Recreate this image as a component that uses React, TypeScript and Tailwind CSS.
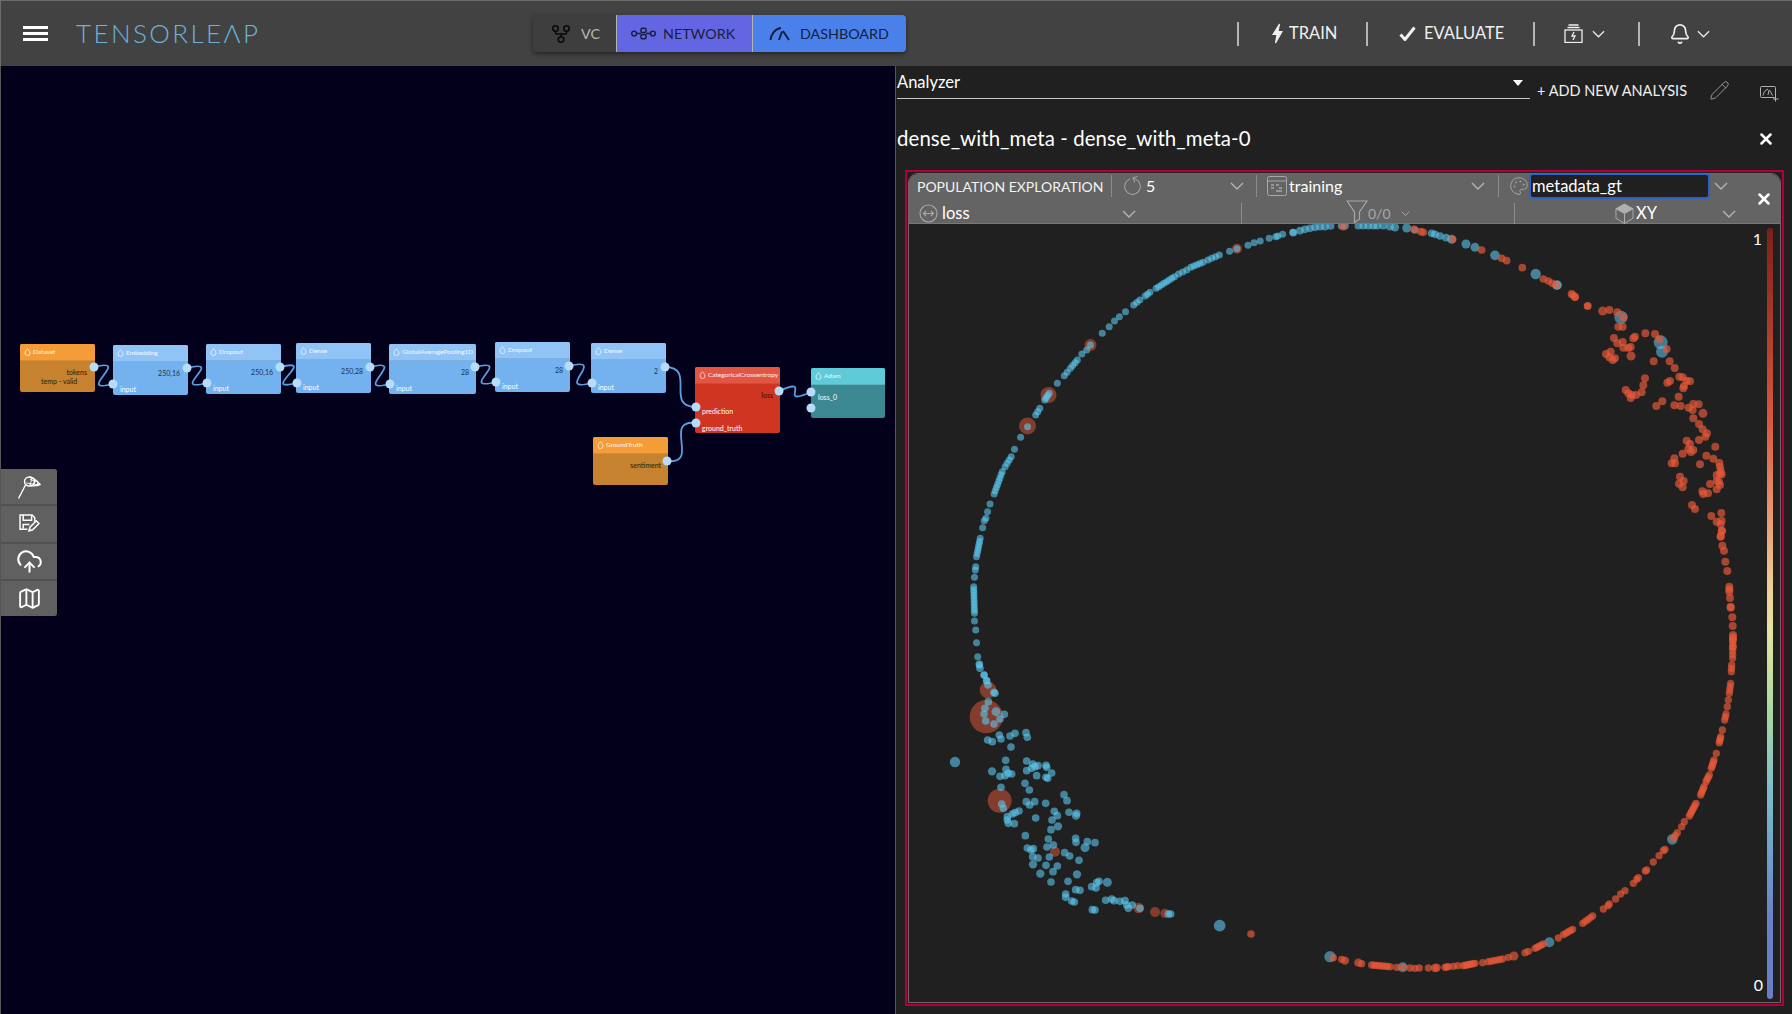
import React from "react";
import { Bell, CloudUpload, GitFork, Map as MapIcon, Palette, Pencil, RotateCw, X } from "lucide-react";

type D = [number, number, number];
const run = (x1: number, y1: number, x2: number, y2: number, n: number): [number, number][] =>
  Array.from({ length: n }, (_, i) => [x1 + ((x2 - x1) * i) / Math.max(1, n - 1), y1 + ((y2 - y1) * i) / Math.max(1, n - 1)]);

const z5 = (p: number[]): D => [920 + p[0] / 3, 660 + p[1] / 3, (p[2] ?? 10) / 3];
const z6 = (p: number[]): D => [1540 + p[0] / 3, 280 + p[1] / 3, (p[2] ?? 10.5) / 3];
const z7 = (p: number[]): D => [950 + p[0] / 2.45, 210 + p[1] / 3, 3];
const z8 = (p: number[]): D => [1280 + p[0] / 3, 640 + p[1] / 3, (p[2] ?? 9.5) / 3];
const z9 = (p: number[]): D => [1290 + p[0] / 3, 210 + p[1] / 3, (p[2] ?? 10) / 3];
const z11 = (p: number[]): D => [1660 + p[0] / 3, 530 + p[1] / 3, 3.5];

const bigRed: D[] = [
  ...[[204, 90, 25], [199, 170, 50], [239, 422, 36], [405, 575, 15], [656, 744, 16], [705, 756, 15], [735, 760, 14]].map(z5),
  [1027.5, 426, 8.5], [1048.5, 395, 8], [1090.5, 345, 6], [1237, 248.7, 5],
];
const bigBlue: D[] = [
  ...[[52, 15, 14], [243, 112, 20], [362, 187, 21], [366, 215, 18]].map(z6),
  ...[[150, 950, 17], [368, 982, 15], [808, 907, 15], [1177, 598, 16]].map(z8),
];
const blue: D[] = [
  ...[[178,12],[180,25],[192,45],[200,62],[204,75],[222,97],[225,100],[205,125],[195,145],[192,162],[228,155,12],[253,163],[197,183],[222,192],[240,177],[245,432],[250,445],[238,225],[243,237],[270,228],[285,220],[318,218],[322,232],[203,240],[217,245],[273,261],[105,306,14],[257,301],[320,303],[338,312],[354,317],[378,316],[380,322],[320,332],[335,325],[345,320],[395,339],[216,334,11],[258,328],[240,349],[255,347],[265,340],[275,342],[350,347],[378,352],[383,355],[315,370],[328,390],[243,382],[432,404],[441,422],[319,425],[329,435],[344,425],[377,430],[403,454],[412,467],[447,457],[468,467,11],[470,460],[297,453],[285,458],[277,462],[262,470],[265,490],[262,480],[283,491],[347,474],[396,480],[414,499,11],[393,509],[316,527],[385,537],[467,535],[468,547],[502,545],[525,548],[495,563,12],[400,555],[381,561],[322,564],[333,570],[340,566],[338,590],[354,594],[388,591],[434,578],[449,588],[477,601],[339,613,11],[378,616],[412,618],[399,635],[361,641,11],[471,643,11],[393,666],[444,664],[537,664],[530,668],[515,680],[528,684],[562,667,12],[437,702],[437,712],[467,689],[480,691],[455,723],[463,726],[557,721],[575,717],[582,722],[600,724],[615,722],[625,745],[637,735],[620,735],[517,749],[525,750],[660,745],[745,762],[752,762],[899,797,16]].map(z5),
  ...[
    [90,1412],[84,1395],[72,1365],[68,1340],[65,1298],[63,1260],[60,1233],
    ...run(60,1210,58,1130,10),[60,1102],[62,1080],[63,1070],...run(65,1040,74,985,7),
    [80,953],[84,932],[88,925],[92,905],[98,882],...run(108,852,128,785,8),...run(135,770,150,740,4),
    [158,718],[173,682],[190,650],...run(210,615,220,595,3),...run(232,570,243,550,4),[263,520],
    ...run(280,497,287,487,2),...run(295,475,312,450,4),[323,432],[335,420],[344,405],
    [373,370],[390,350],[403,333],[415,320],[430,305],...run(450,285,465,270,3),...run(478,258,490,247,3),
    ...run(505,235,550,200,8),...run(560,192,580,180,3),...run(590,172,620,157,5),...run(632,150,660,135,4),
    [685,124],[703,116],[730,106],[745,98],[760,93],[782,85],[798,80],[803,78],[815,73],[840,67],
  ].map(z7),
  ...[[10,68],[30,62],[45,58],[60,55],[75,52],[90,50],[105,50],[122,48],[155,47],[165,47],[205,47],[220,47],[235,47],[250,47],[262,47],[280,47],[300,50],[315,52,11],[350,54,12],[375,60],[425,70],[435,73],[450,78],[468,83],[485,88,12],[528,102,12],[555,112,12],[615,136,13],[737,192,14],[800,226,12]].map(z9),
];
const red: D[] = [
  ...[[160,50],[372,58],[393,65],[400,67],[488,88],[575,120],[635,145],[650,152],[697,173],[760,207],[775,213],[787,220],[800,226],[848,255],[855,262],[893,288,9]].map(z9),
  ...[[95,42],[105,50],[143,78],[188,93,12],[208,90],[232,97],[250,112],[235,140],[248,140],[285,170],[280,175],[316,160],[345,162],[358,178],[380,207],[222,174],[232,190],[248,186],[250,203],[265,204],[272,201],[273,228,12],[198,222],[212,215],[208,232],[218,240],[225,235],[341,244],[389,244],[404,264],[315,295],[310,316],[305,337],[288,345],[275,345],[272,354],[257,330],[265,340],[418,290],[428,292],[440,302],[450,304],[432,318],[430,325],[382,308],[390,303],[416,350],[367,364],[349,378],[403,376],[422,378],[446,383],[460,372],[476,373],[458,390],[489,400,12],[460,415],[477,432],[488,448],[501,460],[496,470],[477,480],[440,482],[450,492],[445,507],[460,510],[453,516],[428,521],[526,500],[499,527],[520,536],[538,549],[540,560],[480,553],[403,535],[395,550],[405,550],[542,572],[540,582],[530,585],[545,583],[530,603],[537,605],[510,612],[540,615],[530,628],[420,590],[431,603],[417,611],[428,622],[487,634],[490,642],[504,640],[456,675],[465,687],[514,708],[544,699],[530,725],[545,722],[542,733],[545,752],[542,770]].map(z6),
  ...[[186,3],[182,18],[187,47],[192,62],[196,95],[202,123],[208,170],[208,178],[208,185],[210,204],[212,230],[212,233],[217,262],[218,288],[219,315],[219,322],[219,330],[219,350]].map(z11),
  ...[...run(1358,0,1358,55,6),...run(1355,75,1354,95,3),...run(1352,130,1348,160,4),[1345,180],[1342,200],...run(1338,222,1334,240,3),[1327,270],...run(1322,290,1318,308,4),[1309,340],...run(1302,360,1294,385,5),...run(1288,405,1278,425,4),...run(1272,440,1262,465,5),...run(1248,490,1228,528,7),...run(1213,545,1205,560,2),...run(1192,578,1180,595,3),[1155,628],[1150,632],[1137,647],[1120,666],[1100,690],[1096,693],[1075,713],[1070,718],[1060,730],[1035,752],[1022,762],[1007,777],[988,792],[984,797],[970,807],...run(938,828,908,850,5),...run(878,868,850,884,5),[835,894],...run(790,912,765,925,5),[745,934],[735,938],[702,948,12],[685,952],...run(668,957,625,965,6),[608,968],...run(585,970,550,977,7),[533,977],[520,979],...run(505,980,495,982,3),[470,983,11],[465,984,11],[445,984],[418,984],[405,985],[390,984],[370,982],[350,982],...run(330,980,275,975,8),[245,971],[235,968,11],[195,962,11],[185,958],[160,953]].map(z8),
  [1251, 934, 3.3],
];

const Chev = ({ cls = "w-[14px] h-[8px] text-[#b4b4b4]" }: { cls?: string }) => (
  <svg viewBox="0 0 14 8" className={cls} fill="none" stroke="currentColor" strokeWidth="1.4"><path d="M1 1l6 6 6-6" /></svg>
);
const Sep = () => <div className="w-[2px] h-[24px] bg-[#b5b5b5]" />;
const TSep = ({ cls = "h-[22px]" }: { cls?: string }) => <div className={`w-[1px] bg-[#8c8c8c] shrink-0 ${cls}`} />;

const Drop = () => (
  <svg viewBox="0 0 10 12" className="w-[7px] h-[8px] shrink-0 text-white" fill="none" stroke="currentColor" strokeWidth="1"><path d="M5 1C3.6 3 1.2 5 1.2 7.5a3.8 3.8 0 0 0 7.6 0C8.8 5 6.4 3 5 1z" /></svg>
);

type Row = { t: string; c: string };
type N = { title: string; pos: string; head: string; body: string; rows: Row[] };
const bh = "bg-[#91c4f6]", bb = "bg-[#73b1ef]";
const oh = "bg-[#f39c38]", ob = "bg-[#c6822e]";
const dark = "text-[#22344a]";
const nodes: N[] = [
  { title: "Dataset", pos: "left-[20px] top-[278px] w-[75px] h-[48px]", head: oh, body: ob, rows: [
    { t: "tokens", c: "self-end mr-[8px] mt-[7px] text-[#2a1c08]" }, { t: "temp - valid", c: "ml-[21px] mt-[1px] text-[#2a1c08]" } ] },
  { title: "Embedding", pos: "left-[113px] top-[279px] w-[75px] h-[50px]", head: bh, body: bb, rows: [
    { t: "250,16", c: `self-end mr-[8px] mt-[7px] ${dark}` }, { t: "input", c: "ml-[7px] mt-[8px] text-white" } ] },
  { title: "Dropout", pos: "left-[206px] top-[278px] w-[75px] h-[50px]", head: bh, body: bb, rows: [
    { t: "250,16", c: `self-end mr-[8px] mt-[7px] ${dark}` }, { t: "input", c: "ml-[7px] mt-[8px] text-white" } ] },
  { title: "Dense", pos: "left-[296px] top-[277px] w-[75px] h-[50px]", head: bh, body: bb, rows: [
    { t: "250,28", c: `self-end mr-[8px] mt-[7px] ${dark}` }, { t: "input", c: "ml-[7px] mt-[8px] text-white" } ] },
  { title: "GlobalAveragePooling1D", pos: "left-[389px] top-[278px] w-[87px] h-[50px]", head: bh, body: bb, rows: [
    { t: "28", c: `self-end mr-[7px] mt-[7px] ${dark}` }, { t: "input", c: "ml-[7px] mt-[8px] text-white" } ] },
  { title: "Dropout", pos: "left-[495px] top-[276px] w-[75px] h-[50px]", head: bh, body: bb, rows: [
    { t: "28", c: `self-end mr-[7px] mt-[7px] ${dark}` }, { t: "input", c: "ml-[7px] mt-[8px] text-white" } ] },
  { title: "Dense", pos: "left-[591px] top-[277px] w-[75px] h-[50px]", head: bh, body: bb, rows: [
    { t: "2", c: `self-end mr-[8px] mt-[7px] ${dark}` }, { t: "input", c: "ml-[7px] mt-[8px] text-white" } ] },
  { title: "CategoricalCrossentropy", pos: "left-[695px] top-[301px] w-[85px] h-[66px]", head: "bg-[#e25543]", body: "bg-[#d03522]", rows: [
    { t: "loss", c: "self-end mr-[7px] mt-[7px] text-[#3a0d06]" }, { t: "prediction", c: "ml-[7px] mt-[8px] text-white" }, { t: "ground_truth", c: "ml-[7px] mt-[9px] text-white" } ] },
  { title: "Adam", pos: "left-[811px] top-[302px] w-[74px] h-[50px]", head: "bg-[#5fcbd9]", body: "bg-[#3b8892]", rows: [
    { t: "loss_0", c: "ml-[7px] mt-[8px] text-white" } ] },
  { title: "GroundTruth", pos: "left-[593px] top-[371px] w-[75px] h-[48px]", head: oh, body: ob, rows: [
    { t: "sentiment", c: "self-end mr-[7px] mt-[7px] text-[#2a1c08]" } ] },
];
const edge = (a: number, b: number, c: number, e: number, d = 40, o = 10) => `M${a} ${b}C${a + d} ${b - o} ${c - d} ${e + o} ${c} ${e}`;
const edges = [
  edge(94, 367, 113, 384), edge(187, 368, 207, 383), edge(280, 367, 297, 383), edge(370, 367, 390, 384),
  edge(475, 367, 496, 382), edge(569, 366, 592, 383), edge(665, 367, 696, 407, 32, 0), edge(667, 461, 696, 423, 34, -4),
  edge(779, 391, 811, 392, 36, 16),
];
const ports = [[94,367],[113,384],[187,368],[207,383],[280,367],[297,383],[370,367],[390,384],[475,367],[496,382],[569,366],[592,383],[665,367],[696,407],[696,423],[667,461],[779,391],[811,392],[811,408]];

const Tab = ({ cls, children }: { cls: string; children: React.ReactNode }) => (
  <div className={`flex items-center h-full text-[14.3px] ${cls}`}>{children}</div>
);

export default function App() {
  return (
    <div className="w-[1792px] h-[1014px] overflow-hidden flex flex-col bg-[#202020] text-white font-['Lato',sans-serif]">
      <header className="h-[66px] shrink-0 flex items-center bg-[#424242] border-t border-l border-[#6c6c6c] border-b-0">
        <div className="ml-[22px] w-[25px] flex flex-col gap-[3px]">
          <div className="h-[3px] bg-white" /><div className="h-[3px] bg-white" /><div className="h-[3px] bg-white" />
        </div>
        <div className="ml-[28px] w-[183px] -mt-[2px] text-[26px] leading-none font-light tracking-[2.4px] text-[#6db3d8] whitespace-nowrap">TENSORLEΛP</div>
        <div className="ml-[274px] w-[373px] h-[37px] flex rounded-[4px] overflow-hidden shadow-[0_2px_4px_rgba(0,0,0,0.45)]">
          <Tab cls="w-[83px] bg-[#3e3e3e] pl-[17px] text-[#b9b9b9] gap-[9px]"><GitFork size={22} className="text-[#0a0a0a]" strokeWidth={1.8} /><span>VC</span></Tab>
          <div className="w-[1px] bg-[#b5b5b5]" />
          <Tab cls="w-[135px] bg-[#6366e2] pl-[14px] text-[#1a1d3c] gap-[7px]">
            <svg viewBox="0 0 24 12" className="w-[25px] h-[13px] shrink-0" fill="none" stroke="currentColor" strokeWidth="1.4"><circle cx="3" cy="6" r="2.3" /><rect x="9.5" y="1" width="5" height="4" rx="1.4" /><rect x="9.5" y="7" width="5" height="4" rx="1.4" /><circle cx="21" cy="6" r="2.3" /><path d="M5.3 6H9.5M14.5 6H18.7" /></svg>
            <span>NETWORK</span>
          </Tab>
          <div className="w-[1px] bg-[#b5b5b5]" />
          <Tab cls="w-[153px] bg-[#4a80ea] pl-[16px] text-[#10203f] gap-[9px]">
            <svg viewBox="0 0 22 14" className="w-[22px] h-[15px] shrink-0" fill="none" stroke="currentColor" strokeWidth="2"><path d="M1.5 13.5C2 8 5.5 2.5 12 1.5" /><path d="M13 5l-3 8.5M14 4.5l6 9" /></svg>
            <span>DASHBOARD</span>
          </Tab>
        </div>
        <div className="ml-[331px] flex items-center text-[16.5px] text-[#f0f0f0]">
          <Sep />
          <div className="w-[127px] pl-[33px] flex items-center gap-[6px]">
            <svg viewBox="0 0 11 21" className="w-[11px] h-[21px]" fill="none" stroke="currentColor" strokeWidth="1.2"><path d="M7.5 1L1 11.5h4L3.5 20 10 8.5H6L7.5 1z" fill="currentColor" /></svg>
            <span>TRAIN</span>
          </div>
          <Sep />
          <div className="w-[165px] pl-[31px] flex items-center gap-[8px]">
            <svg viewBox="0 0 17 15" className="w-[17px] h-[15px]" fill="none" stroke="currentColor" strokeWidth="3"><path d="M1.5 8.5l4.5 5L15.5 1.5" /></svg>
            <span>EVALUATE</span>
          </div>
          <Sep />
          <div className="w-[103px] pl-[29px] flex items-center gap-[9px]">
            <svg viewBox="0 0 19 19" className="w-[19px] h-[19px]" fill="none" stroke="currentColor" strokeWidth="1.3"><path d="M4.5 1h10M3.5 3.5h12" /><rect x="1" y="6" width="17" height="12.5" /><path d="M10 8l-2 4h3l-2 4" /></svg>
            <Chev cls="w-[13px] h-[8px] text-[#e8e8e8]" />
          </div>
          <Sep />
          <div className="pl-[29px] flex items-center gap-[6px]">
            <Bell size={22} strokeWidth={1.8} />
            <Chev cls="w-[13px] h-[8px] text-[#e8e8e8]" />
          </div>
        </div>
      </header>

      <div className="flex-1 flex min-h-0">
        <main className="relative w-[896px] shrink-0 bg-[#02001a] border-l border-r border-[#555] overflow-hidden">
          <div className="absolute -left-[1px] top-0 w-[896px] h-[948px]">
            {nodes.map((n, i) => (
              <div key={i} className={`absolute flex flex-col rounded-[2px] overflow-hidden text-[7px] leading-[8px] ${n.pos} ${n.body}`}>
                <div className={`h-[17px] shrink-0 flex items-center gap-[2px] pl-[4px] text-[6.5px] text-white/90 border-b border-black/10 whitespace-nowrap ${n.head}`}><Drop /><span>{n.title}</span></div>
                {n.rows.map((r, j) => <div key={j} className={r.c}>{r.t}</div>)}
              </div>
            ))}
            <svg viewBox="0 66 896 948" className="absolute left-0 top-0 w-[896px] h-[948px] pointer-events-none" fill="none">
              {edges.map((d, i) => <path key={i} d={d} stroke="#5c9fe0" strokeWidth="1.8" />)}
              {ports.map((p, i) => <circle key={i} cx={p[0]} cy={p[1]} r="4.5" fill="#b6dcf8" />)}
            </svg>
          </div>
          <aside className="absolute left-0 top-[403px] w-[56px] h-[147px] flex flex-col rounded-r-[3px] overflow-hidden bg-[#515151] gap-[2px] text-white">
            <div className="flex-1 bg-[#606060] flex items-center justify-center">
              <svg viewBox="0 0 24 24" className="w-[24px] h-[24px]" fill="none" stroke="currentColor" strokeWidth="1.4"><path d="M1.5 23.5L8.5 10" /><ellipse cx="12.5" cy="6.5" rx="5" ry="4.5" /><path d="M12.5 2C17 2.5 20 6 23 9.5c-3.5 1.5-7 2-10 .5" /><path d="M15 3l-2 7M18 5l-2 6M21 8l-3 3M9 8l13 2M13 4l6 3" strokeWidth="0.9" /></svg>
            </div>
            <div className="flex-1 bg-[#606060] flex items-center justify-center">
              <svg viewBox="0 0 20 19" className="w-[21px] h-[20px]" fill="none" stroke="currentColor" strokeWidth="1.4"><path d="M8 14.5H1V1h11.5L15 3.5V8" /><path d="M4 1v5h8V1M4 14v-4h6" /><path d="M9.5 16l1-3.5 6-6 2.5 2.5-6 6-3.5 1z" /></svg>
            </div>
            <div className="flex-1 bg-[#606060] flex items-center justify-center"><CloudUpload size={27} strokeWidth={1.8} /></div>
            <div className="flex-1 bg-[#606060] flex items-center justify-center"><MapIcon size={25} strokeWidth={1.8} /></div>
          </aside>
        </main>

        <section className="flex-1 min-w-0 flex flex-col">
          <div className="h-[33px] shrink-0 flex items-start">
            <div className="ml-[1px] w-[633px] h-[33px] border-b border-[#c8c8c8] flex items-start justify-between">
              <span className="text-[16.5px] leading-[20px] mt-[6px]">Analyzer</span>
              <svg viewBox="0 0 10 6" className="w-[10px] h-[6px] mt-[14px] mr-[7px] text-white"><path d="M0 0h10L5 6z" fill="currentColor" /></svg>
            </div>
            <span className="ml-[7px] mt-[16px] text-[14.5px] leading-[18px] text-[#efefef] whitespace-nowrap">+ ADD NEW ANALYSIS</span>
            <Pencil size={21} strokeWidth={1.1} className="ml-[22px] mt-[14px] text-[#9a9a9a]" />
            <svg viewBox="0 0 19 16" className="w-[19px] h-[16px] ml-[30px] mt-[20px] text-[#b0b0b0]" fill="none" stroke="currentColor" strokeWidth="1"><rect x="0.5" y="0.5" width="15" height="11" rx="1" /><path d="M3 9.5C3.5 6 6 3.5 8 3.2M8 9l1-5M9.5 4l3 5.5" /><path d="M15.5 10v5.5M13 13h5.5" /></svg>
          </div>
          <div className="h-[71px] shrink-0 flex items-start justify-between">
            <span className="ml-[1px] mt-[25px] text-[20.4px] leading-[28px] tracking-[0.1px]">dense_with_meta - dense_with_meta-0</span>
            <X size={18} strokeWidth={3.4} className="mr-[17px] mt-[31px]" />
          </div>

          <div className="flex-1 min-h-0 ml-[9px] mr-[8px] mb-[8px] border-2 border-[#b3003c] p-[1px] flex">
            <div className="flex-1 min-w-0 flex flex-col border border-[#6a6a6a] rounded-tl-[10px] rounded-tr-[10px] overflow-hidden">
              <div className="h-[50px] shrink-0 bg-[#646464] flex border-b border-[#787878]">
                <div className="w-[835px] flex flex-col">
                  <div className="h-[26px] -mt-[1px] flex items-center text-[16px]">
                    <div className="w-[202px] pl-[8px] text-[14px] whitespace-nowrap text-[#f2f2f2]">POPULATION EXPLORATION</div>
                    <TSep />
                    <div className="w-[144px] pl-[10px] pr-[12px] flex items-center">
                      <RotateCw size={21} strokeWidth={1.1} className="text-[#a8a8a8] -scale-x-100 rotate-[70deg]" />
                      <span className="ml-[3px]">5</span><div className="flex-1" /><Chev />
                    </div>
                    <TSep />
                    <div className="w-[241px] pl-[10px] pr-[13px] flex items-center">
                      <svg viewBox="0 0 20 20" className="w-[20px] h-[20px] text-[#a8a8a8] shrink-0" fill="none" stroke="currentColor" strokeWidth="1"><rect x="0.5" y="0.5" width="19" height="19" rx="2" /><path d="M0.5 5h19" /><path d="M4 9h3M9 9h3M4 12h3M12 12h3M9 15h6" strokeWidth="1.4" /></svg>
                      <span className="ml-[2px]">training</span><div className="flex-1" /><Chev />
                    </div>
                    <TSep />
                    <div className="flex-1 pl-[10px] flex items-center">
                      <Palette size={20} strokeWidth={1.1} className="text-[#a8a8a8] shrink-0" />
                      <div className="w-[181px] h-[26px] bg-[#202020] border-2 border-[#2a62c4] rounded-[4px] flex items-center pl-[1px] pt-[1px] leading-none text-[16.5px]">metadata_gt</div>
                      <div className="ml-[4px]"><Chev /></div>
                    </div>
                  </div>
                  <div className="h-[23px] mt-[3px] flex items-center text-[16.5px]">
                    <div className="w-[332px] pl-[10px] pr-[105px] flex items-center">
                      <svg viewBox="0 0 19 19" className="w-[19px] h-[19px] text-[#a8a8a8] shrink-0" fill="none" stroke="currentColor" strokeWidth="1.1"><circle cx="9.5" cy="9.5" r="8.5" /><path d="M4.5 9.5h10M7 7L4.5 9.5 7 12M12 7l2.5 2.5L12 12" /></svg>
                      <span className="ml-[4px]">loss</span><div className="flex-1" /><Chev />
                    </div>
                    <TSep />
                    <div className="w-[272px] pl-[104px] flex items-center">
                      <svg viewBox="0 0 22 23" className="w-[22px] h-[23px] -mt-[5px] text-[#a8a8a8] shrink-0" fill="none" stroke="currentColor" strokeWidth="1.2"><path d="M1 1h20l-7.5 11v7l-5 3.5V12L1 1z" /></svg>
                      <span className="text-[14px] text-[#a8a8a8]">0/0</span>
                      <Chev cls="ml-[10px] w-[9px] h-[5px] text-[#b4b4b4]" />
                    </div>
                    <TSep />
                    <div className="flex-1 pl-[100px] flex items-center">
                      <svg viewBox="0 0 20 22" className="w-[19px] h-[21px] text-[#b0b0b0] shrink-0" fill="none" stroke="currentColor" strokeWidth="1"><path d="M10 1L19 6l-9 5-9-5 9-5z" fill="currentColor" /><path d="M1 6v10l9 5.5V11M19 6v10l-9 5.5" /></svg>
                      <span className="ml-[2px]">XY</span><div className="flex-1" /><div className="mr-[8px]"><Chev /></div>
                    </div>
                  </div>
                </div>
                <div className="flex-1 flex items-center pl-[11px]"><X size={18} strokeWidth={3.4} /></div>
              </div>
              <div className="relative flex-1 min-h-0 bg-[#202020]">
                <svg viewBox="909 224 872 778" className="absolute left-0 top-0 w-[872px] h-[778px] blur-[0.4px]">
                  {bigRed.map((d, i) => <circle key={i} cx={d[0]} cy={d[1]} r={d[2]} fill="#e8593a" fillOpacity="0.5" />)}
                  {bigBlue.map((d, i) => <circle key={i} cx={d[0]} cy={d[1]} r={d[2]} fill="#5cc8f0" fillOpacity="0.55" />)}
                  {blue.map((d, i) => <circle key={i} cx={d[0]} cy={d[1]} r={d[2] + 0.5} fill="#5cc8f0" fillOpacity="0.6" />)}
                  {red.map((d, i) => <circle key={i} cx={d[0]} cy={d[1]} r={d[2] + 0.5} fill="#e8593a" fillOpacity="0.68" />)}
                </svg>
                <span className="absolute right-[18px] top-[5px] text-[16px] leading-[20px]">1</span>
                <span className="absolute right-[17px] bottom-[7px] text-[16px] leading-[20px]">0</span>
                <div className="absolute right-[7px] top-[4px] bottom-[3px] w-[6px] rounded-full bg-[linear-gradient(to_bottom,#7c2018_0%,#a83a28_12%,#d8583c_25%,#e8906a_36%,#f0cc90_46%,#e8e4a0_52%,#a8d8a0_63%,#80c0c8_72%,#6e9ccc_82%,#6a80c8_90%,#6a7cc8_100%)]" />
              </div>
            </div>
          </div>
        </section>
      </div>
    </div>
  );
}
